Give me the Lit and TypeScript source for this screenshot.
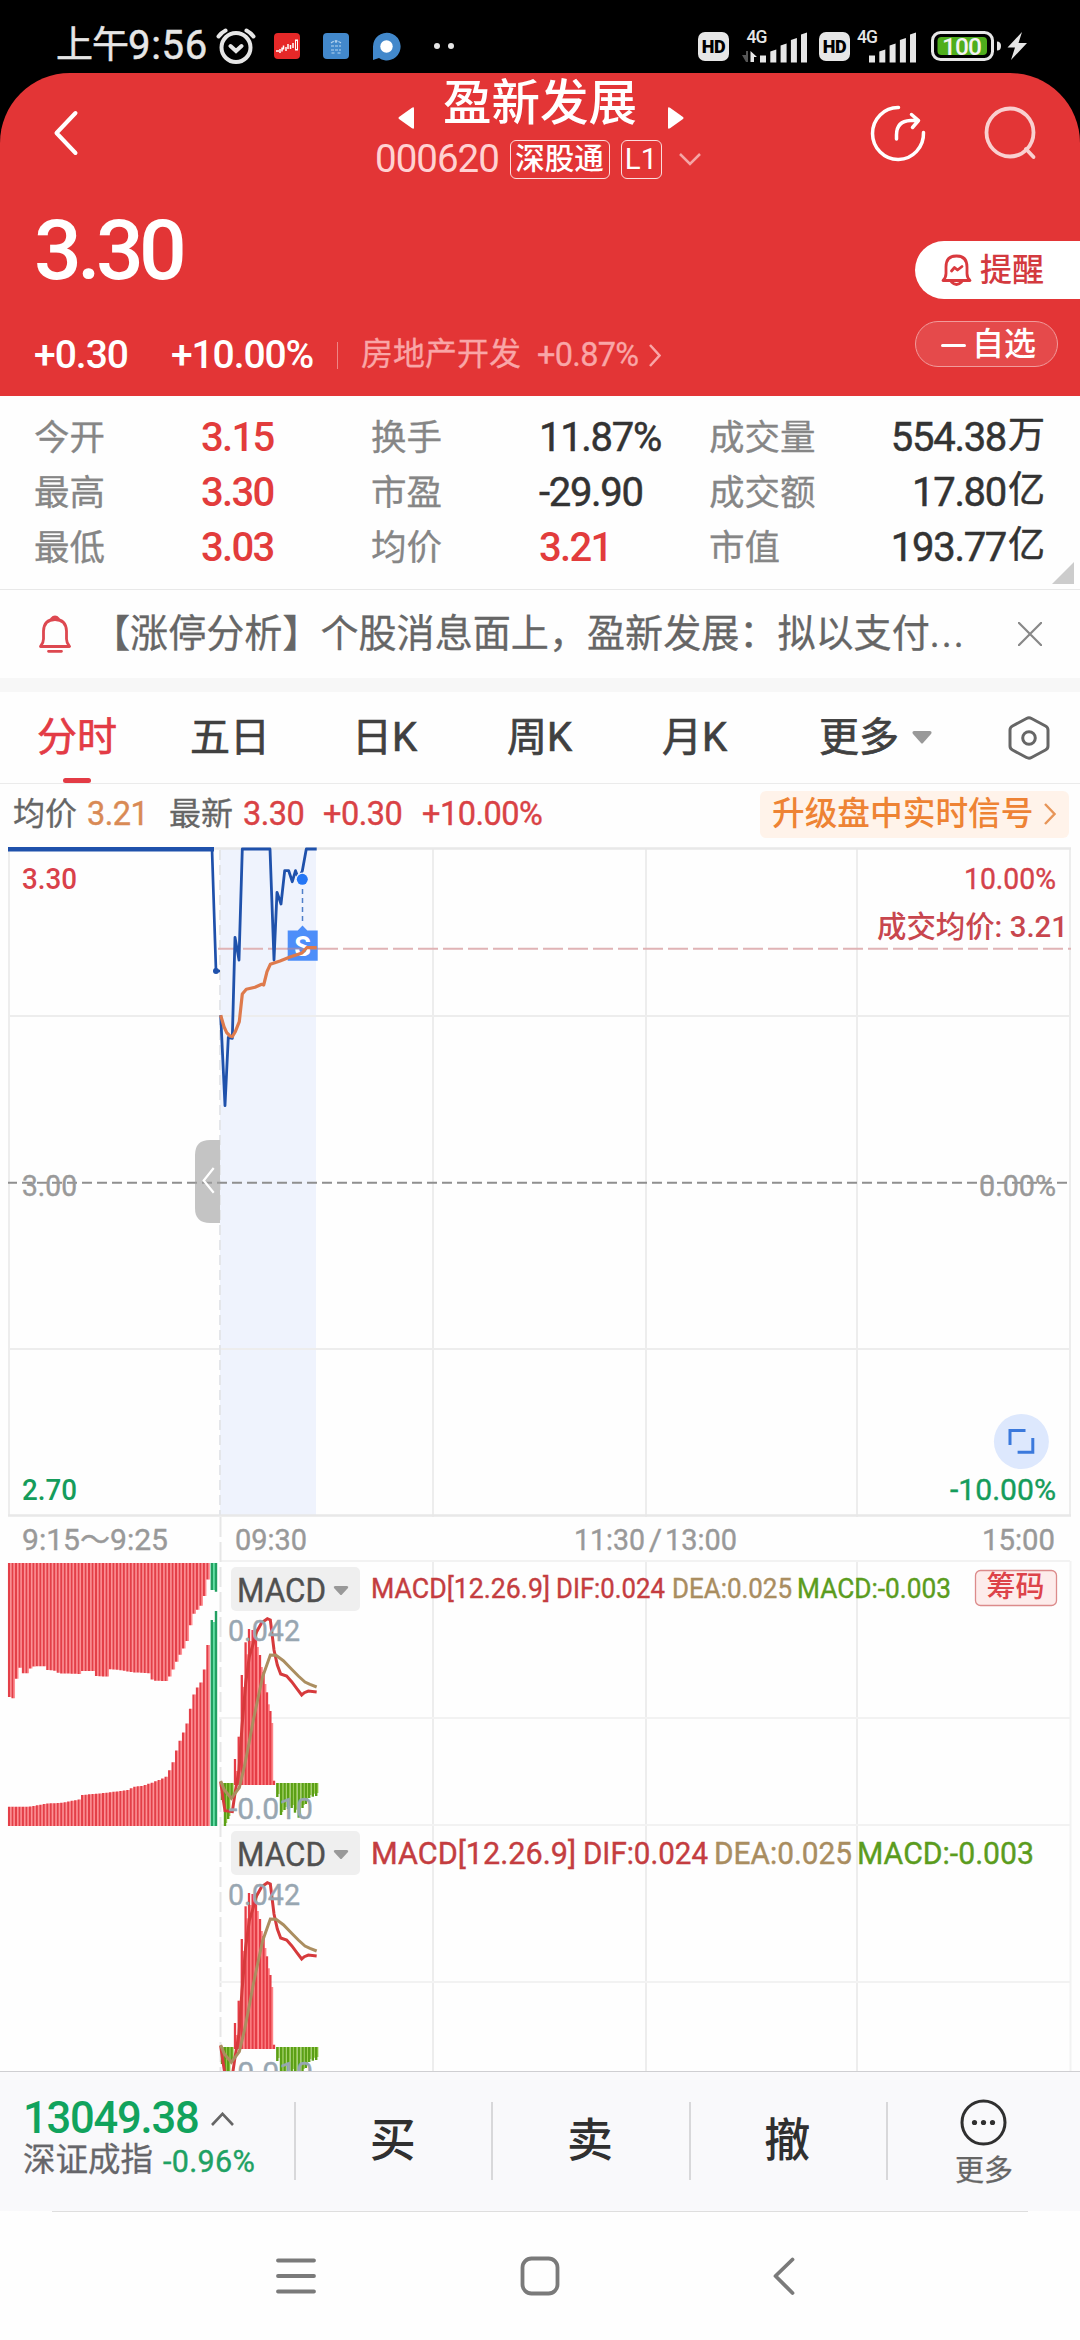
import { LitElement, html, svg, css } from "lit";
import { customElement } from "lit/decorators.js";

const base = css`
  :host { display: block; box-sizing: border-box; font-family: Roboto, "Noto Sans CJK SC", sans-serif; }
  * { box-sizing: border-box; }
  svg { display: block; flex: none; }
  span { white-space: nowrap; }
`;

/* ---------- status bar ---------- */

const signal = () => svg`
  <path d="M0 23h6v7h-6z M10.3 19l6-2v13h-6z M20.6 13l6-2v19h-6z M30.9 7.5l6-2v24.500h-6z M41 2l6-2v30h-6z" fill="#e6e6e6"/>`;

@customElement("status-bar")
export class StatusBar extends LitElement {
  static styles = [base, css`
    :host { height: 73px; background: #000; color: #e6e6e6; }
    .bar { display: flex; height: 73px; padding: 19px 53px 0 56px; align-items: center; }
    .time { display: flex; align-items: center; font-size: 40px; line-height: 44px; width: 157px; -webkit-text-stroke: 0.500px #e6e6e6; }
    .time .cn { font-size: 37px; letter-spacing: -1px; }
    .time .num { letter-spacing: 0.700px; }
    .apps { display: flex; flex: 1; align-items: center; }
    .app1 { margin-left: 17px; } .app2 { margin-left: 23px; } .app3 { margin-left: 23px; } .dots { margin-left: 31px; }
    .hd { width: 31px; height: 29px; border-radius: 7px; background: #e6e6e6; color: #000; font: 900 18px/29px Roboto, sans-serif; text-align: center; letter-spacing: -0.5px; }
    .net { margin-left: 12px; } .net2 { margin-left: 7px; }
    .hd2 { margin-left: 11px; }
    .battery { margin-left: 14px; }
  `];
  render() {
    return html`<div class="bar">
      <div class="time"><span class="cn">上午</span><span class="num">9:56</span></div>
      <div class="apps">
        <svg width="44" height="36" viewBox="0 0 44 36" fill="none" stroke="#e6e6e6" stroke-width="4" stroke-linecap="round"><circle cx="23" cy="19.500" r="14.500"/><path d="M17.500 18l5.500 5 5.500-5M5.500 8.500q3-4 7-6M40.500 8.500q-3-4-7-6"/></svg>
        <svg class="app1" width="26" height="26" viewBox="0 0 26 26"><rect width="26" height="26" rx="4" fill="#e62828"/><path d="M2 18h3M6 16v4M8 14.500v4M9.500 12.500v4M12 14v4M14 11v5M16.500 12v4M19 10v5" fill="none" stroke="#fff" stroke-width="1.500"/><rect x="21.500" y="7" width="2" height="10" fill="none" stroke="#fff"/></svg>
        <svg class="app2" width="26" height="26" viewBox="0 0 26 26"><rect width="26" height="26" rx="4" fill="#4288cb"/><path d="M8 10q5-4 10 0M8 13h10M8 17h10M8.500 20h3M14.500 20h3M13 7v4" fill="none" stroke="#b7d5ef" stroke-width="1.200" stroke-dasharray="3 1"/></svg>
        <svg class="app3" width="29" height="29" viewBox="0 0 29 29"><path d="M1 28V14.500A13.800 13.800 0 1 1 7 26z" fill="#4288cb"/><circle cx="14.500" cy="14.500" r="6.200" fill="#fff"/></svg>
        <svg class="dots" width="24" height="8" viewBox="0 0 24 8" fill="#e6e6e6"><circle cx="5" cy="4" r="3"/><circle cx="19" cy="4" r="3"/></svg>
      </div>
      <div class="hd">HD</div>
      <svg class="net" width="67" height="36" viewBox="0 0 67 36"><g transform="translate(19 4.500)">${signal()}</g><path d="M1 27h4v-4h2v11h-2z" fill="#555"/><path d="M9.500 23l6.500 6h-3v5h-3.500z" fill="#e6e6e6"/><text x="5.500" y="14.500" font-size="17.500" font-weight="500" fill="#e6e6e6" textLength="21">4G</text></svg>
      <div class="hd hd2">HD</div>
      <svg class="net2" width="60" height="36" viewBox="0 0 60 36"><g transform="translate(12 4.500)">${signal()}</g><text x="0" y="14.500" font-size="17.500" font-weight="500" fill="#e6e6e6" textLength="21">4G</text></svg>
      <svg class="battery" width="96" height="30" viewBox="0 0 96 30"><rect x="1.500" y="1.500" width="60" height="27" rx="8" fill="none" stroke="#e6e6e6" stroke-width="3"/><rect x="6.500" y="6" width="49.500" height="18" rx="4" fill="#4fae1c"/><path d="M66 10.500q4 0 4 4.500t-4 4.500z" fill="#e6e6e6"/><text x="11" y="24" font-size="24.500" font-weight="500" fill="#f4f4f4" textLength="40">100</text><path d="M91 1L76.500 16.500h7.500l-4 12.500L96 12h-8.500z" fill="#e6e6e6"/></svg>
    </div>`;
  }
}

/* ---------- quote header ---------- */

@customElement("quote-header")
export class QuoteHeader extends LitElement {
  static styles = [base, css`
    :host { height: 323px; background: #000; color: #fff; }
    .card { height: 323px; padding-top: 2px; background: #e33536; border-radius: 70px 70px 0 0; display: flex; flex-direction: column; }
    .top { display: flex; height: 104px; padding-left: 52px; }
    .back { margin-top: 34px; }
    .center { width: 326px; margin-left: 295px; }
    .name { display: flex; height: 56px; padding-left: 23px; }
    .name svg { margin-top: 32px; }
    .title { width: 200px; margin: 0 25px 0 29px; font-size: 48.500px; line-height: 58px; font-weight: 500; }
    .sub { display: flex; height: 56px; align-items: center; }
    .code { width: 134.500px; font-size: 38.500px; color: #ffd2d2; letter-spacing: -1px; line-height: 40px; }
    .badge { height: 39px; border: 1.500px solid #fbdcdc; border-radius: 6px; font-size: 29.500px; line-height: 36px; text-align: center; font-weight: 500; }
    .b1 { width: 100px; } .b2 { width: 41px; margin: 0 17px 0 11px; font-size: 29.500px; font-weight: 400; }
    .share { margin: 28px 0 0 168px; } .search { margin: 31px 0 0 56px; }
    .body { display: flex; justify-content: space-between; flex: 1; }
    .left { padding-left: 34px; }
    .price { display: block; font-size: 84px; line-height: 100px; letter-spacing: -4.600px; font-weight: 500; margin-top: 22px; }
    .change { display: flex; align-items: center; height: 44px; margin-top: 32px; font-size: 39px; font-weight: 500; }
    .c1 { width: 137px; letter-spacing: -1px; } .c2 { width: 166px; letter-spacing: -1.100px; }
    .div { width: 1px; height: 27px; background: #ee8585; margin-right: 23px; }
    .sector { color: #f9a6a7; font-size: 32px; width: 176px; font-weight: 400; line-height: 40px; margin-top: -2px; -webkit-text-stroke: 0.300px; }
    .pct { color: #f9a6a7; font-size: 32.500px; width: 112px; letter-spacing: -0.700px; font-weight: 400; -webkit-text-stroke: 0.300px; }
    .right { width: 165px; padding-top: 62px; }
    .alert { display: flex; align-items: center; height: 58px; background: #fff; border-radius: 29px 0 0 29px; color: #d33a3f; font-size: 32px; line-height: 40px; font-weight: 500; padding: 0 0 0 26px; gap: 8px; }
    .fav { display: flex; align-items: center; height: 46px; width: 143px; margin-top: 22px; border: 1.500px solid #f19b9b; border-radius: 23px; background: #e54a4b; font-size: 32px; font-weight: 500; line-height: 40px; padding-left: 25px; gap: 6px; }
    .minus { width: 25px; height: 3.500px; border-radius: 2px; background: #fff; margin-top: 3px; }
  `];
  render() {
    return html`<div class="card">
      <div class="top">
        <svg class="back" width="28" height="47" viewBox="0 0 28 47" fill="none" stroke="#fff" stroke-width="4" stroke-linecap="round" stroke-linejoin="round"><path d="M23.500 4L4.500 24l19 20"/></svg>
        <div class="center">
          <div class="name">
            <svg width="16" height="22" viewBox="0 0 16 22"><path d="M16 1.500v19q0 2-2 .8L1 12q-1-1 0-2L14 .7q2-1.200 2 .8z" fill="#fff"/></svg>
            <span class="title">盈新发展</span>
            <svg width="16" height="22" viewBox="0 0 16 22"><path d="M0 1.500v19q0 2 2 .8L15 12q1-1 0-2L2 .7q-2-1.200-2 .8z" fill="#fff"/></svg>
          </div>
          <div class="sub">
            <span class="code">000620</span><span class="badge b1">深股通</span><span class="badge b2">L1</span>
            <svg width="22" height="13" viewBox="0 0 22 13" fill="none" stroke="#f5a5a5" stroke-width="2.500"><path d="M1 1l10 10L21 1"/></svg>
          </div>
        </div>
        <svg class="share" width="58" height="60" viewBox="0 0 58 60" fill="none" stroke="#fff" stroke-width="3.500" stroke-linecap="round" stroke-linejoin="round"><path d="M29.500 4.500A25.500 26 0 1 0 54.500 29.500M27.500 36v-4q0-14 14-14.500h8M42.500 11.500l7 6-6 7"/></svg>
        <svg class="search" width="56" height="56" viewBox="0 0 56 56" fill="none" stroke="#f9d0d0" stroke-width="3.800" stroke-linecap="round"><ellipse cx="27" cy="26.500" rx="23.500" ry="24"/><path d="M43 43l7.500 8"/></svg>
      </div>
      <div class="body">
        <div class="left">
          <span class="price">3.30</span>
          <div class="change"><span class="c1">+0.30</span><span class="c2">+10.00%</span><i class="div"></i><span class="sector">房地产开发</span><span class="pct">+0.87%</span>
            <svg width="12" height="23" viewBox="0 0 12 23" fill="none" stroke="#f9a6a7" stroke-width="2.500"><path d="M1 1l9.500 10.500L1 22"/></svg></div>
        </div>
        <div class="right">
          <div class="alert"><svg width="31" height="33" viewBox="0 0 31 33" fill="none" stroke="#d9393e" stroke-width="2.800" stroke-linejoin="round" stroke-linecap="round"><path d="M2 26.500q3-3 3-7V13Q5 2 15.500 2T26 13v6.500q0 4 3 7z"/><path d="M10.500 28q5 5 10 0" /><path d="M10.500 17l3-3.500 3 2.500 4.500-3.500"/></svg><span>提醒</span></div>
          <div class="fav"><i class="minus"></i><span>自选</span></div>
        </div>
      </div>
    </div>`;
  }
}

/* ---------- key figures ---------- */

type Figure = { open: [string, string]; mid: [string, string]; up: boolean; last: [string, string, string] };
const figures: Figure[] = [
  { open: ["今开", "3.15"], mid: ["换手", "11.87%"], up: false, last: ["成交量", "554.38", "万"] },
  { open: ["最高", "3.30"], mid: ["市盈", "-29.90"], up: false, last: ["成交额", "17.80", "亿"] },
  { open: ["最低", "3.03"], mid: ["均价", "3.21"], up: true, last: ["市值", "193.77", "亿"] },
];

@customElement("key-figures")
export class KeyFigures extends LitElement {
  static styles = [base, css`
    :host { height: 194px; background: #fefefe; border-bottom: 1px solid #e8e8e8; position: relative; }
    .grid { display: grid; grid-template-columns: 167px 170px 168px 170px 1fr; grid-auto-rows: 55px; align-items: center; padding: 14px 35px 0 34px; }
    .label { font-size: 35.500px; color: #868686; line-height: 40px; -webkit-text-stroke: 0.300px; }
    .value { font-size: 40px; letter-spacing: -1.700px; line-height: 40px; }
    .red { color: #e23c3c; font-weight: 500; }
    .dark { color: #333; letter-spacing: -1.300px; -webkit-text-stroke: 0.500px #333; }
    .pair { display: flex; justify-content: space-between; align-items: center; }
    .last { display: flex; align-items: center; }
    .unit { font-size: 37px; line-height: 40px; color: #333; margin: -3px 0 0 2px; -webkit-text-stroke: 0.500px #333; }
    .corner { position: absolute; right: 6px; bottom: 5px; }
  `];
  render() {
    return html`<div class="grid">${figures.map(f => html`
      <span class="label">${f.open[0]}</span><span class="value red">${f.open[1]}</span>
      <span class="label">${f.mid[0]}</span><span class="value ${f.up ? "red" : "dark"}">${f.mid[1]}</span>
      <div class="pair"><span class="label">${f.last[0]}</span><div class="last"><span class="value dark">${f.last[1]}</span><span class="unit">${f.last[2]}</span></div></div>`)}</div>
      <svg class="corner" width="22" height="22" viewBox="0 0 22 22"><path d="M22 0v22H0z" fill="#ccc"/></svg>`;
  }
}

/* ---------- notice, tabs, summary ---------- */

@customElement("notice-bar")
export class NoticeBar extends LitElement {
  static styles = [base, css`
    :host { height: 102px; background: #fefefe; border-bottom: 14px solid #f7f7f7; }
    .row { display: flex; align-items: center; height: 88px; padding: 0 38px 0 39px; }
    .text { flex: 1; margin-left: 21px; font-size: 38.100px; line-height: 44px; color: #666; -webkit-text-stroke: 0.300px #666; }
    .dots { letter-spacing: 2px; }
  `];
  render() {
    return html`<div class="row">
      <svg width="32" height="38" viewBox="0 0 32 38" fill="none" stroke="#dd4850" stroke-width="2.800" stroke-linejoin="round" stroke-linecap="round"><path d="M12.500 4Q16 0 19.500 4M16 4.500Q27 4.500 27.500 16v8q0 4 3 7.500H1.500q3-3.500 3-7.500v-8Q5 4.500 16 4.500zM9.500 36.300h13"/></svg>
      <span class="text">【涨停分析】个股消息面上，盈新发展：拟以支付<span class="dots">...</span></span>
      <svg width="24" height="24" viewBox="0 0 24 24" stroke="#888" stroke-width="2.200"><path d="M0 0l24 24M24 0L0 24"/></svg>
    </div>`;
  }
}

@customElement("period-tabs")
export class PeriodTabs extends LitElement {
  static styles = [base, css`
    :host { height: 92px; background: #fefefe; border-bottom: 1px solid #ebebeb; }
    .tabs { display: flex; height: 91px; padding-left: 37px; font-size: 40px; line-height: 91px; color: #404040; -webkit-text-stroke: 0.700px; }
    .tab { flex: none; display: flex; align-items: center; }
    .on { color: #e33b45; width: 153px; display: grid; align-content: start; }
    .on::after { content: ""; width: 28px; height: 5px; border-radius: 3px; background: #e33b45; margin: -5px 0 0 26px; }
    .w2 { width: 162px; } .w3 { width: 155px; } .w4 { width: 155px; } .w5 { width: 157px; } .more { width: 189px; gap: 13px; }
  `];
  render() {
    return html`<div class="tabs">
      <span class="tab on">分时</span><span class="tab w2">五日</span><span class="tab w3">日K</span><span class="tab w4">周K</span><span class="tab w5">月K</span>
      <span class="tab more">更多<svg width="20" height="13" viewBox="0 0 20 13"><path d="M2 0h16q2.500.5 1 3L11 12q-1 1-2 0L1 3Q-.5.5 2 0z" fill="#999"/></svg></span>
      <span class="tab"><svg width="42" height="44" viewBox="0 0 42 44" fill="none" stroke="#666" stroke-width="3" stroke-linejoin="round"><path d="M18.500 2.500q2.500-1.300 5 0L37.500 10q2.500 1.300 2.500 4v16q0 2.700-2.500 4l-14 7.500q-2.500 1.300-5 0L4.500 34Q2 32.700 2 30V14q0-2.700 2.500-4z"/><circle cx="21" cy="22" r="6.300"/></svg></span>
    </div>`;
  }
}

@customElement("price-summary")
export class PriceSummary extends LitElement {
  static styles = [base, css`
    :host { height: 62px; background: #fefefe; }
    .row { display: flex; height: 56px; padding: 4px 11px 0 13px; align-items: center; font-size: 32px; color: #666; line-height: 40px; }
    .a { width: 74px; -webkit-text-stroke: 0.300px; }
    .num { font-size: 32.500px; letter-spacing: -0.500px; color: #d94245; -webkit-text-stroke: 0.400px; }
    .avg { color: #d98a55; width: 82px; } .c { width: 80px; } .d { width: 99px; }
    .promo { display: flex; margin-left: auto; width: 309px; height: 47px; align-items: center; background: #fff3ea; border-radius: 6px; color: #ee8334; padding-left: 12px; gap: 10px; font-size: 32.700px; font-weight: 500; }
  `];
  render() {
    return html`<div class="row">
      <span class="a">均价</span><span class="num avg">3.21</span><span class="a">最新</span><span class="num c">3.30</span><span class="num d">+0.30</span><span class="num">+10.00%</span>
      <div class="promo"><span>升级盘中实时信号</span><svg width="12" height="22" viewBox="0 0 12 22" fill="none" stroke="#e79558" stroke-width="2.400"><path d="M1 1l9.500 10L1 21"/></svg></div>
    </div>`;
  }
}

/* ---------- charts ---------- */

type Pt = [number, number];

const price: Pt[] = [[220.700, 1015.300], [225, 1105.700], [228.300, 1037.300], [232.300, 1038.300], [235, 937.300], [239, 960], [242.300, 849], [270, 849], [274, 960], [277, 892.300], [281, 904], [284.700, 870.700], [288.700, 870.700], [292.300, 881.700], [295.500, 870.700], [298.500, 879], [302.300, 871], [306.300, 849], [316.700, 849]];
const average: Pt[] = [[220.700, 1015.300], [224, 1026.700], [226.700, 1032.700], [230, 1036], [232.300, 1036.700], [235.300, 1031.700], [239.300, 1021.700], [242.300, 994], [246.300, 989.300], [255, 987.300], [261.700, 984.300], [263.700, 985], [267, 971.700], [270.300, 964.300], [280, 961], [290, 957], [302, 953], [306.700, 947.700], [316.700, 947.700]];

/* auction volume envelopes: x in px, y relative to 1400 */
const upper: Pt[] = [[8, 296.700], [12.700, 298.300], [15.800, 279.300], [19.600, 267.300], [22.700, 273.300], [27.200, 273.300], [30, 268.300], [33.700, 266.300], [44, 266.300], [47, 270], [54.400, 270.700], [58.500, 273.300], [81, 274], [82, 271], [94.700, 271], [96, 276], [108.500, 276.700], [109.500, 269.300], [119, 270], [132.600, 272.300], [150, 273.300], [152, 280.700], [168, 281], [169.800, 273.300], [174, 267.700], [177.400, 257.700], [181, 252.700], [184.600, 245.300], [188, 237.300], [191, 218.700], [195, 210.700], [198, 209.300], [202, 203.300], [205.200, 190.700], [208.700, 172.700]];
const lower: Pt[] = [[8, 406.700], [29.300, 406.700], [33.700, 406], [44.800, 403.700], [62, 402.700], [70.600, 401], [80.200, 399.300], [82, 395], [106.800, 392.700], [127.400, 390], [134.300, 386.700], [143, 385.700], [151.500, 382.700], [161.900, 378.700], [168, 375.300], [170, 366], [174, 360], [177.400, 344], [181, 338.300], [184.200, 329], [188, 320], [191.500, 300], [195, 290], [198.300, 285.700], [202, 280], [205.200, 262.300], [208.700, 234.300]];

const at = (pts: Pt[], x: number): number => {
  for (let i = 1; i < pts.length; i++) {
    if (x <= pts[i][0]) {
      const [x0, y0] = pts[i - 1], [x1, y1] = pts[i];
      return y0 + ((x - x0) / (x1 - x0)) * (y1 - y0);
    }
  }
  return pts[pts.length - 1][1];
};
const line = (pts: Pt[]) => pts.map(p => p.join(",")).join(" ");

const histUp: Pt[] = [[235, 1759], [238.700, 1736.700], [241.800, 1675], [245.600, 1642.300], [249, 1629], [252.600, 1630], [256, 1635], [260, 1655], [263.600, 1672], [267, 1692.300], [270.400, 1711], [274, 1780.700]];
const histDown: Pt[] = [[222, 1800], [225, 1826], [228.200, 1819], [231.500, 1798], [277.300, 1797], [281, 1815], [284.500, 1810], [288, 1809], [291.700, 1808], [295, 1812.700], [298.700, 1817.700], [302.500, 1808], [305.800, 1804], [309.200, 1798], [312.800, 1796.700], [316.200, 1796]];
const m = (pts: Pt[]): Pt[] => pts.map(([x, y]) => [190 + x / 3, 1550 + y / 3]);
const dif = m([[92, 695], [100, 750], [105, 782], [127, 785], [135, 730], [147, 660], [156, 530], [167, 400], [178, 320], [190, 280], [200, 245], [215, 218], [232, 206], [241, 210], [252, 300], [262, 345], [272, 372], [290, 378], [305, 395], [320, 415], [335, 435], [343, 428], [355, 423], [380, 426]]);
const dea = m([[92, 693], [103, 720], [124, 745], [148, 713], [163, 650], [175, 590], [190, 510], [205, 440], [218, 380], [241, 315], [258, 316], [280, 332], [305, 358], [325, 378], [345, 396], [360, 403], [380, 411]]);

const label = (s: string, x: number, y: number, w: number, fill: string, size = 30, weight = 400) =>
  svg`<text x=${x} y=${y} font-size=${size} font-weight=${weight} fill=${fill} stroke=${fill} stroke-width=${weight === 400 ? 0.4 : 0} textLength=${w} lengthAdjust="spacingAndGlyphs">${s}</text>`;

@customElement("stock-charts")
export class StockCharts extends LitElement {
  static styles = [base, css`
    :host { height: 1225px; background: #fefefe; overflow: hidden; }
    text { font-family: Roboto, "Noto Sans CJK SC", sans-serif; }
  `];

  macd() {
    return svg`
      <path d="M220 1718H1070" stroke="#f2f2f2" stroke-width="2"/>
      ${histDown.map(([x, y]) => svg`<path d="M${x + 1.200} 1783V${y - 3}" stroke="#9ed055" stroke-width="2"/><path d="M${x} 1783V${y}" stroke="#5b9f16" stroke-width="2.400"/>`)}
      ${histUp.map(([x, y]) => svg`<path d="M${x + 1.800} 1785V${Math.min(y + 12, 1785)}" stroke="#ff8488" stroke-width="2"/><path d="M${x} 1785V${y}" stroke="#e63c46" stroke-width="2.300"/>`)}
      <polyline points=${line(dif)} fill="none" stroke="#d63a3c" stroke-width="3"/>
      <polyline points=${line(dea)} fill="none" stroke="#ab8e60" stroke-width="3"/>
      ${label("0.042", 228, 1640.500, 72, "#98a6b1")}
      ${label("-0.010", 229, 1818.500, 84, "#98a6b1")}
      <rect x="231" y="1567" width="129" height="44" rx="5" fill="#efefef"/>
      ${label("MACD", 237, 1602, 89, "#505050", 32.500)}
      <path d="M335 1586h12q2 .5 1 2l-6 6.500q-1 1-2 0l-6-6.500q-1-1.500 1-2z" fill="#999"/>`;
  }

  render() {
    const bars = Array.from({ length: 58 }, (_, i) => 9 + i * 3.480);
    return html`<svg width="1080" height="1225" viewBox="0 846 1080 1225">
      <rect x="220" y="848" width="96" height="667" fill="#eff3fd"/>
      <g stroke="#ededed" stroke-width="2" fill="none">
        <path d="M9 848V1515M1070 848V1515M433 848V1517M646 848V1517M857 848V1517M9 1016H1070M9 1349H1070"/>
        <path d="M8 848.500H1071M8 1515.500H1071" stroke="#e8e8e8" stroke-width="2.500"/>
        <path d="M433 1561V2071M646 1561V2071M857 1561V2071"/>
        <path d="M1070.500 1561V2071M220 1561H1070M220 1825H1070" stroke="#f2f2f2"/>
      </g>
      <path d="M220 850V1515" stroke="#e4e6ea" stroke-width="2" stroke-dasharray="10 5"/>
      <path d="M220.500 1517V2071" stroke="#e6e6e6" stroke-width="2" stroke-dasharray="20 5"/>

      <path d="M218 948.700H1071" stroke="#e0b3b5" stroke-width="2" stroke-dasharray="20 5"/>
      <path d="M8 1182.700H1067" stroke="#8f8f8f" stroke-width="2" stroke-dasharray="10 5" stroke-dashoffset="1"/>
      ${label("3.30", 22, 889, 55, "#d9414a", 30, 500)}
      ${label("3.00", 22, 1196, 55, "#999")}
      ${label("2.70", 22, 1500, 55, "#159c5b", 30, 500)}
      ${label("10.00%", 964, 889, 92, "#d4424a")}
      ${label("成交均价: 3.21", 877, 937, 191, "#c8464e", 30, 500)}
      ${label("0.00%", 979, 1196, 77, "#999")}
      ${label("-10.00%", 950, 1500, 106, "#159c5b")}

      <path d="M8 849.200H214" stroke="#1f51ab" stroke-width="4.500"/>
      <path d="M212 849L216 971H220" fill="none" stroke="#1f51ab" stroke-width="2.700"/>
      <circle cx="216" cy="971" r="3" fill="#1f51ab"/>
      <polyline points=${line(price)} fill="none" stroke="#1f51ab" stroke-width="2.800" stroke-linejoin="round"/>
      <circle cx="302.300" cy="879.300" r="6.800" fill="#eff3fd"/><circle cx="302.300" cy="879.300" r="5.500" fill="#2476f5"/>
      <path d="M302.500 889V922" stroke="#4f7fc9" stroke-width="1.500" stroke-dasharray="5 4"/>
      <path d="M287.700 930.500h10l4.800-5 4.800 5h10.400v30.200h-30z" fill="#4d8ef9"/>
      <path d="M287.700 948.700h30" stroke="#8c8cc0" stroke-width="2"/>
      <text x="302.500" y="955.500" font-size="27" font-weight="700" fill="#fff" text-anchor="middle">S</text>
      <polyline points=${line(average)} fill="none" stroke="#de7a4c" stroke-width="3.200" stroke-linejoin="round"/>
      <path d="M220 1140h-10q-15 0-15 15v53q0 15 15 15h10z" fill="#c4c4c4"/>
      <path d="M195 1182.700h25" stroke="#999" stroke-width="2" stroke-dasharray="10 5" stroke-dashoffset="8"/>
      <path d="M213.700 1168l-10 12.500 10 12.200" fill="none" stroke="#fff" stroke-width="2.200"/>
      <circle cx="1021.400" cy="1441.500" r="27.500" fill="#dde8fd"/>
      <path d="M1010 1445v-14.500h15.500M1017.600 1452.300h15.200V1438" fill="none" stroke="#3b79dc" stroke-width="3"/>

      ${label("9:15～9:25", 22, 1550, 146, "#999")}
      ${label("09:30", 235, 1550, 72, "#999")}
      ${label("11:30", 574, 1550, 71, "#999")}${label("/", 649, 1550, 13, "#999")}${label("13:00", 665, 1550, 72, "#999")}
      ${label("15:00", 982, 1550, 73, "#999")}

      ${bars.map(x => svg`
        <path d="M${x + 1.700} 1563V${1400 + at(upper, x)}M${x + 1.700} 1826V${1400 + at(lower, x)}" stroke="#ff9094" stroke-width="1.700"/>
        <path d="M${x} 1563V${1400 + at(upper, x)}M${x} 1826V${1400 + at(lower, x)}" stroke="#e43f48" stroke-width="2.100"/>`)}
      <path d="M214 1563V1590M214 1826V1622" stroke="#62e0a4" stroke-width="2"/>
      <path d="M211.800 1563V1590M211.800 1826V1620M216 1563V1591.700M216 1826V1611" stroke="#22a062" stroke-width="2.400"/>

      <g>${this.macd()}</g>
      <g transform="translate(0 264)">${this.macd()}</g>

      ${label("MACD[12.26.9]", 371, 1598.300, 179, "#c43d40", 27.500)}
      ${label("DIF:0.024", 556, 1598.300, 109, "#c43d40", 27.500)}
      ${label("DEA:0.025", 672, 1598.300, 120, "#a98d60", 27.500)}
      ${label("MACD:-0.003", 797, 1598.300, 154, "#5b9c1e", 27.500)}
      <rect x="975.500" y="1570.500" width="81" height="35" rx="5" fill="#fdeceb" stroke="#dc8b8b" stroke-width="1.300"/>
      ${label("筹码", 986.500, 1597, 58, "#dd4349", 29, 500)}
      ${label("MACD[12.26.9]", 371, 1863.800, 205, "#c43d40", 31)}
      ${label("DIF:0.024", 583, 1863.800, 125, "#c43d40", 31)}
      ${label("DEA:0.025", 714, 1863.800, 138, "#a98d60", 31)}
      ${label("MACD:-0.003", 857, 1863.800, 177, "#5b9c1e", 31)}
    </svg>`;
  }
}

/* ---------- trade bar and system navigation ---------- */

@customElement("trade-bar")
export class TradeBar extends LitElement {
  static styles = [base, css`
    :host { height: 140px; background: #f9f9fb; border-top: 1px solid #cfcfd2; }
    .row { display: flex; height: 139px; }
    .index { width: 294px; padding: 26px 0 0 23px; }
    .line { display: flex; align-items: center; height: 42px; }
    .value { width: 188px; font-size: 43.500px; font-weight: 500; letter-spacing: -1.200px; color: #11a35d; line-height: 44px; }
    .name { width: 140px; font-size: 32.500px; color: #66666a; line-height: 40px; margin-top: -2px; -webkit-text-stroke: 0.300px; }
    .pct { font-size: 30.500px; color: #1ea163; letter-spacing: 0.300px; -webkit-text-stroke: 0.400px; }
    .btn { display: flex; align-items: center; justify-content: center; width: 197.300px; padding-bottom: 3px; font-size: 46px; line-height: 50px; font-weight: 500; color: #303030; }
    .btn, .more { background: linear-gradient(#d8d8da, #d8d8da) 0 30px / 2px 78px no-repeat; }
    .more { display: flex; flex: 1; flex-direction: column; align-items: center; padding: 27px 0 0 2px; font-size: 29px; color: #666; line-height: 44px; gap: 3px; -webkit-text-stroke: 0.300px; }
  `];
  render() {
    return html`<div class="row">
      <div class="index">
        <div class="line"><span class="value">13049.38</span><svg width="23" height="14" viewBox="0 0 23 14" fill="none" stroke="#666" stroke-width="2.600"><path d="M1 13L11.500 1.800 22 13"/></svg></div>
        <div class="line"><span class="name">深证成指</span><span class="pct">-0.96%</span></div>
      </div>
      <div class="btn">买</div><div class="btn">卖</div><div class="btn">撤</div>
      <div class="more"><svg width="47" height="47" viewBox="0 0 47 47"><circle cx="23.500" cy="23.500" r="21.500" fill="none" stroke="#303030" stroke-width="3"/><g fill="#303030"><circle cx="14.500" cy="23.500" r="2.600"/><circle cx="23.500" cy="23.500" r="2.600"/><circle cx="32.500" cy="23.500" r="2.600"/></g></svg><span>更多</span></div>
    </div>`;
  }
}

@customElement("system-nav")
export class SystemNav extends LitElement {
  static styles = [base, css`
    :host { height: 129px; background: #fefefe; }
    .rule { height: 1px; margin: 0 52px; background: #dedede; }
    .nav { display: flex; align-items: center; height: 128px; padding-left: 275px; }
    .home { margin: 0 213px 0 203px; }
  `];
  render() {
    return html`<div class="rule"></div><div class="nav">
      <svg width="42" height="40" viewBox="0 0 42 40" stroke="#7a7a7a" stroke-width="3.800" stroke-linecap="round"><path d="M3 4.500h36M3 20h36M3 35.500h36"/></svg>
      <svg class="home" width="40" height="40" viewBox="0 0 40 40" fill="none" stroke="#7a7a7a" stroke-width="3.800"><rect x="2.500" y="2.500" width="35" height="35" rx="9"/></svg>
      <svg width="23" height="40" viewBox="0 0 23 40" fill="none" stroke="#7a7a7a" stroke-width="3.800" stroke-linecap="round" stroke-linejoin="round"><path d="M19.500 3.500L2.500 20l17 17"/></svg>
    </div>`;
  }
}

@customElement("app-root")
export class AppRoot extends LitElement {
  static styles = css`
    :host { display: block; width: 1080px; height: 2340px; overflow: hidden; background: #fefefe; }
  `;
  render() {
    return html`
      <status-bar></status-bar>
      <quote-header></quote-header>
      <key-figures></key-figures>
      <notice-bar></notice-bar>
      <period-tabs></period-tabs>
      <price-summary></price-summary>
      <stock-charts></stock-charts>
      <trade-bar></trade-bar>
      <system-nav></system-nav>`;
  }
}
